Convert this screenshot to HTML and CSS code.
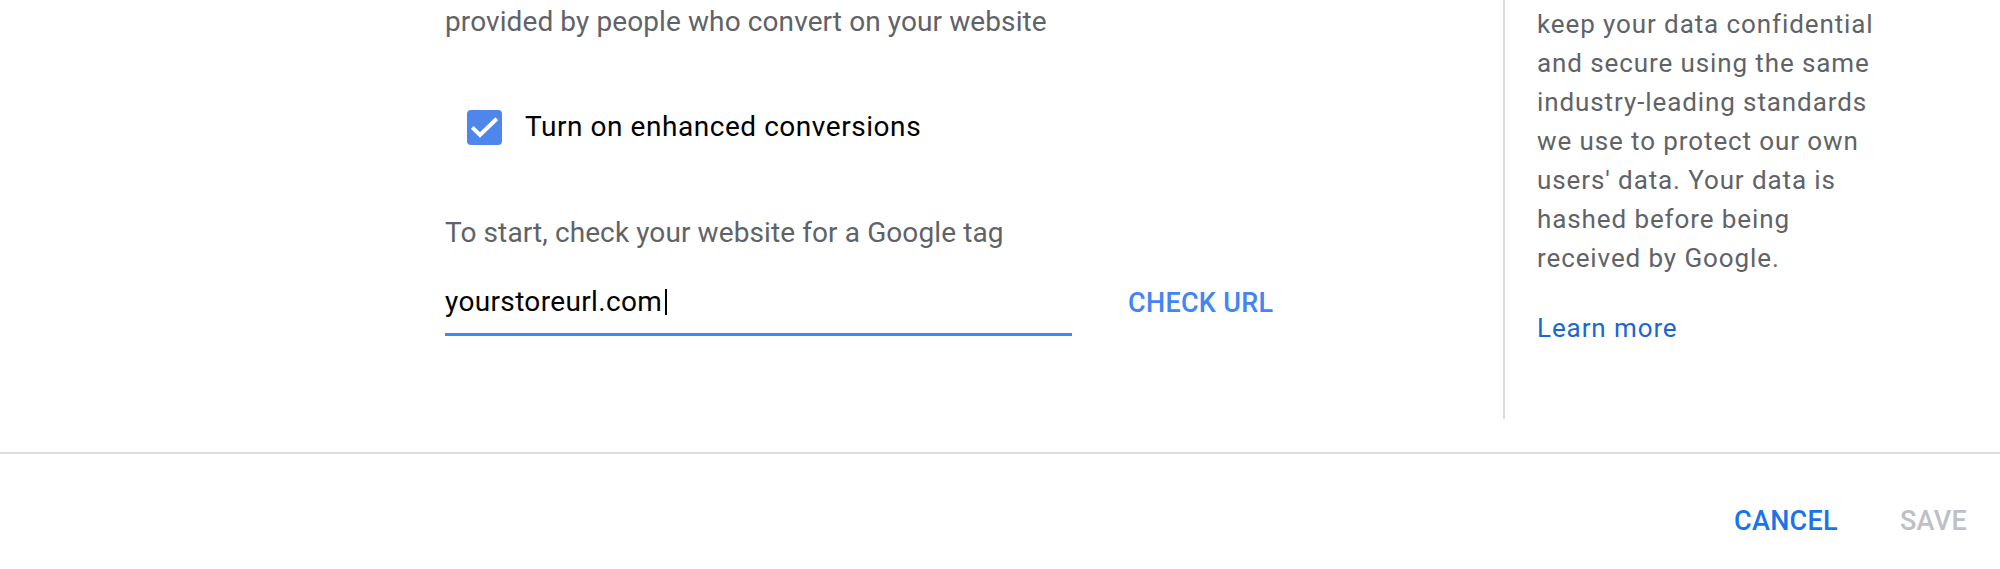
FILE: index.html
```html
<!DOCTYPE html>
<html lang="en">
<head>
<meta charset="utf-8">
<title>Enhanced conversions</title>
<link rel="stylesheet" href="styles.css">
</head>
<body>
<div class="dialog">
  <div class="content">
    <div class="main">
      <p class="desc">provided by people who convert on your website</p>
      <label class="check-row">
        <span class="checkbox">
          <svg viewBox="0 0 24 24" width="35" height="35"><path d="M3.6 11.9L8.9 17.1L20.4 6" fill="none" stroke="#fff" stroke-width="2.7"/></svg>
        </span>
        <span class="check-label">Turn on enhanced conversions</span>
      </label>
      <p class="hint">To start, check your website for a Google tag</p>
      <div class="url-row">
        <div class="field"><span class="value">yourstoreurl.com</span><span class="caret"></span></div>
        <span class="text-btn check-url">CHECK URL</span>
      </div>
    </div>
    <aside class="side">
      <p class="side-text">keep your data confidential and secure using the same industry-leading standards we use to protect our own users' data. Your data is hashed before being received by Google.</p>
      <a class="learn" href="#">Learn more</a>
    </aside>
  </div>
  <div class="footer">
    <span class="text-btn cancel">CANCEL</span>
    <span class="text-btn save">SAVE</span>
  </div>
</div>
</body>
</html>
```
FILE: styles.css
```css
html, body {
  margin: 0;
  padding: 0;
  background: #fff;
}
body {
  width: 2000px;
  height: 569px;
  overflow: hidden;
  font-family: Roboto, "Liberation Sans", Arial, sans-serif;
}
.dialog {
  display: flex;
  flex-direction: column;
}
.content {
  display: flex;
  height: 452px;
  border-bottom: 2px solid #dadce0;
}
.main {
  width: 1058px;
  padding-left: 445px;
  display: flex;
  flex-direction: column;
  align-items: flex-start;
}
.desc {
  margin: 2px 0 0;
  font-size: 28px;
  line-height: 40px;
  letter-spacing: 0.1px;
  color: #5f6368;
}
.check-row {
  display: flex;
  align-items: center;
  gap: 23px;
  margin: 65px 0 0 22px;
}
.checkbox {
  width: 35px;
  height: 35px;
  border-radius: 4px;
  background: #4f86ec;
  display: flex;
  align-items: center;
  justify-content: center;
}
.check-label {
  font-size: 28px;
  line-height: 40px;
  letter-spacing: 0.55px;
  color: #000;
}
.hint {
  margin: 66px 0 0;
  font-size: 28px;
  line-height: 40px;
  letter-spacing: 0.1px;
  color: #5f6368;
}
.url-row {
  display: flex;
  align-items: flex-start;
  gap: 56px;
  margin-top: 29px;
}
.field {
  width: 627px;
  padding-bottom: 11px;
  border-bottom: 3px solid #4285f4;
  display: flex;
  align-items: center;
}
.value {
  font-size: 28px;
  line-height: 40px;
  letter-spacing: 0.35px;
  color: #000;
}
.caret {
  width: 2px;
  height: 26px;
  background: #000;
  margin-left: 3px;
}
.text-btn {
  font-size: 27px;
  line-height: 40px;
  font-weight: 500;
  letter-spacing: 0.3px;
}
.check-url {
  color: #4285f4;
  margin-top: 1px;
}
.side {
  border-left: 2px solid #dadce0;
  height: 419px;
  padding-left: 32px;
  box-sizing: border-box;
}
.side-text {
  width: 352px;
  margin: 5px 0 0;
  font-size: 26px;
  line-height: 39px;
  letter-spacing: 0.9px;
  color: #5f6368;
}
.learn {
  display: inline-block;
  margin-top: 31px;
  font-size: 26px;
  line-height: 39px;
  letter-spacing: 0.9px;
  color: #1967d2;
  text-decoration: none;
}
.footer {
  display: flex;
  justify-content: flex-end;
  gap: 62px;
  padding: 47px 33px 0 0;
}
.cancel {
  color: #1a73e8;
}
.save {
  color: #bdc1c6;
}
```
